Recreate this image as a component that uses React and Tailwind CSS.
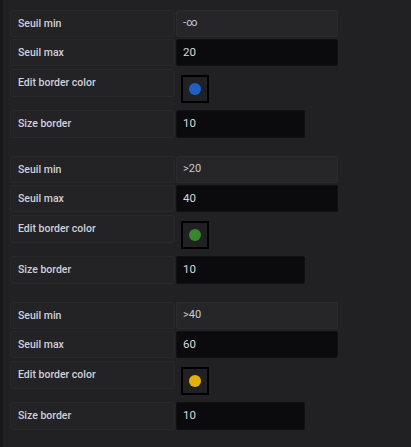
import React from "react";

const sections = [
  { min: "-∞", max: "20", color: "#1f60c4", size: "10" },
  { min: ">20", max: "40", color: "#37872d", size: "10" },
  { min: ">40", max: "60", color: "#e0b400", size: "10" },
];

function Label({ children, tall }) {
  return (
    <div
      className={`w-[165px] shrink-0 flex items-center pl-[7px] bg-[#232326] border border-[#28282b] rounded-[2px] text-[10.5px] font-medium text-[#d0d0d8] ${
        tall ? "h-[28px]" : "h-[27px]"
      }`}
    >
      {children}
    </div>
  );
}

function Section({ s }) {
  return (
    <div className="flex flex-col">
      <div className="flex gap-px">
        <Label>Seuil min</Label>
        <div className="w-[162px] h-[27px] flex items-center pl-[6px] bg-[#262629] border border-[#2b2b2e] rounded-[2px] text-[11px] text-[#c8c8d0]">
          {s.min}
        </div>
      </div>
      <div className="flex gap-px mt-[2px]">
        <Label>Seuil max</Label>
        <div className="w-[162px] h-[27px] flex items-center pl-[6px] bg-[#0b0b0d] border border-[#111114] rounded-[2px] text-[11.5px] text-[#d8d9da]">
          {s.max}
        </div>
      </div>
      <div className="flex gap-px mt-[3px]">
        <Label tall>Edit border color</Label>
        <div className="pl-[5px] pt-[6px]">
          <div className="w-[28px] h-[28px] border-2 border-black flex items-center justify-center">
            <div
              className="w-[12px] h-[12px] rounded-full"
              style={{ backgroundColor: s.color }}
            />
          </div>
        </div>
      </div>
      <div className="flex gap-px mt-[7px]">
        <Label tall>Size border</Label>
        <div className="w-[129px] h-[28px] flex items-center pl-[6px] bg-[#0b0b0d] border border-[#111114] rounded-[2px] text-[11.5px] text-[#d8d9da]">
          {s.size}
        </div>
      </div>
    </div>
  );
}

export default function App() {
  return (
    <div
      className="flex w-[411px] h-[447px] bg-[#212124] overflow-hidden"
      style={{ fontFamily: "Roboto, 'Liberation Sans', sans-serif" }}
    >
      <div className="w-[3px] shrink-0 bg-[#17171a]" />
      <div className="flex flex-col gap-[18px] pl-[7px] pt-[10px]">
        {sections.map((s, i) => (
          <Section key={i} s={s} />
        ))}
      </div>
    </div>
  );
}
